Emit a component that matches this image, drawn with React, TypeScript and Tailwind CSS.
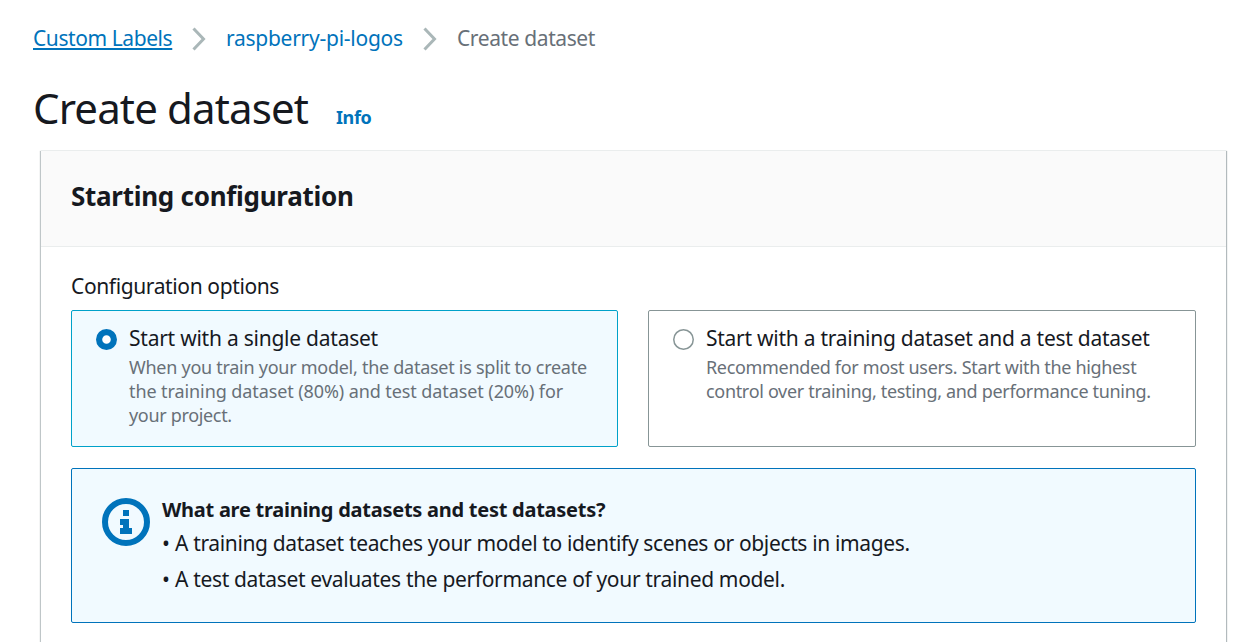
import type { ReactNode } from "react";

function Chevron() {
  return (
    <svg className="h-[24px] w-[14px] shrink-0" viewBox="0 0 14 24" fill="none" stroke="#aab7b8" strokeWidth="3">
      <path d="M1.5 1.5 L11.5 12 L1.5 22.5" />
    </svg>
  );
}

function Radio({ checked }: { checked: boolean }) {
  return (
    <svg className="mt-[6px] h-[21px] w-[21px] shrink-0" viewBox="0 0 21 21">
      {checked ? (
        <circle cx="10.5" cy="10.5" r="7.4" fill="#fff" stroke="#0073bb" strokeWidth="6.2" />
      ) : (
        <circle cx="10.5" cy="10.5" r="9.75" fill="#fff" stroke="#879596" strokeWidth="1.5" />
      )}
    </svg>
  );
}

function InfoIcon() {
  return (
    <svg className="mt-[29px] h-[48px] w-[48px] shrink-0" viewBox="0 0 48 48">
      <circle cx="24" cy="24" r="21" fill="none" stroke="#0073bb" strokeWidth="6" />
      <path d="M21 12h6v6h-6z M18 21h9v9h3v6H18v-6h3v-3h-3z" fill="#0073bb" />
    </svg>
  );
}

function OptionTile({ checked, title, children }: { checked: boolean; title: ReactNode; children: ReactNode }) {
  return (
    <div
      className={
        checked
          ? "flex h-[137px] rounded-[2px] border border-[#00a1c9] bg-[#f1faff] pt-3 pl-6"
          : "flex h-[137px] rounded-[2px] border border-[#879596] bg-white pt-3 pl-6"
      }
    >
      <Radio checked={checked} />
      <div className="ml-3 whitespace-nowrap">
        <div className="text-[21px] leading-[30px] text-[#16191f]">{title}</div>
        <div className="mt-[2px] text-[18px] leading-6 text-[#687078]">{children}</div>
      </div>
    </div>
  );
}

export default function App() {
  return (
    <div className="h-[642px] overflow-hidden bg-white font-['Noto_Sans',sans-serif] text-[#16191f]">
      <nav className="flex h-[53px] items-start pt-[23px] pl-[33px] text-[21px] leading-[30px] whitespace-nowrap text-[#0073bb]">
        <div className="w-[139px]">
          <a className="tracking-[-0.42px] underline decoration-2 underline-offset-2 [text-decoration-skip-ink:none]">Custom Labels</a>
        </div>
        <div className="ml-5 mt-1"><Chevron /></div>
        <a className="ml-5 w-[177px] tracking-[-0.26px]">raspberry-pi-logos</a>
        <div className="ml-5 mt-1"><Chevron /></div>
        <span className="ml-5 tracking-[-0.4px] text-[#687078]">Create dataset</span>
      </nav>

      <header className="flex h-[97px] items-baseline pt-7 pl-[33px] leading-[54px] whitespace-nowrap">
        <h1 className="w-[303px] text-[42px] tracking-[-0.86px]">Create dataset</h1>
        <a className="text-[18px] font-bold tracking-[-0.4px] text-[#0073bb]">Info</a>
      </header>

      <section className="mr-[10px] ml-[41px] h-[520px] border-t border-[#eaeded] bg-white shadow-[1px_1px_1px_0_rgba(0,28,36,0.3),-1px_1px_1px_0_rgba(0,28,36,0.25)]">
        <div className="h-24 border-b border-[#eaeded] bg-[#fafafa] pt-[27px] pl-[30px]">
          <h2 className="text-[26px] leading-9 font-bold tracking-[-0.27px]">Starting configuration</h2>
        </div>
        <div className="pt-6 pr-[30px] pl-[30px]">
          <div className="text-[21px] leading-[30px] tracking-[-0.38px]">Configuration options</div>
          <div className="mt-[9px] grid grid-cols-[547px_548px] gap-[30px]">
            <OptionTile checked title={<span className="tracking-[-0.24px]">Start with a single dataset</span>}>
              <div className="tracking-[-0.27px]">When you train your model, the dataset is split to create</div>
              <div className="tracking-[-0.09px]">the training dataset (80%) and test dataset (20%) for</div>
              <div className="tracking-[-0.33px]">your project.</div>
            </OptionTile>
            <OptionTile checked={false} title={<span className="tracking-[-0.26px]">Start with a training dataset and a test dataset</span>}>
              <div className="tracking-[-0.33px]">Recommended for most users. Start with the highest</div>
              <div className="tracking-[-0.32px]">control over training, testing, and performance tuning.</div>
            </OptionTile>
          </div>

          <div className="mt-[21px] flex h-[155px] rounded-[2px] border border-[#0073bb] bg-[#f1faff] pl-[30px]">
            <InfoIcon />
            <div className="ml-3 pt-[26px] text-[21px] whitespace-nowrap">
              <div className="text-[20px] leading-[30px] font-bold tracking-[-0.26px]">What are training datasets and test datasets?</div>
              <div className="flex leading-9"><span className="w-[13px]">•</span><span className="tracking-[-0.355px]">A training dataset teaches your model to identify scenes or objects in images.</span></div>
              <div className="flex leading-9"><span className="w-[13px]">•</span><span className="tracking-[-0.34px]">A test dataset evaluates the performance of your trained model.</span></div>
            </div>
          </div>
        </div>
      </section>
    </div>
  );
}
